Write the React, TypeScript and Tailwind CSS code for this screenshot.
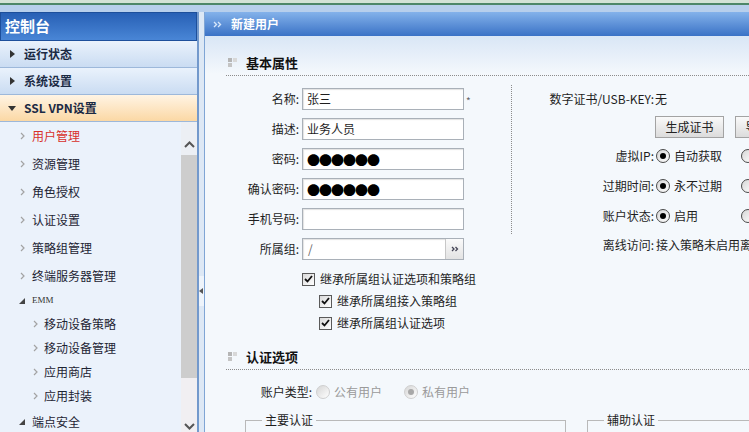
import React from "react";
import clsx from "clsx";

const subItems: { label: string; active?: boolean }[] = [
  { label: "用户管理", active: true },
  { label: "资源管理" },
  { label: "角色授权" },
  { label: "认证设置" },
  { label: "策略组管理" },
  { label: "终端服务器管理" },
];

const emmItems = ["移动设备策略", "移动设备管理", "应用商店", "应用封装"];

function Chev() {
  return (
    <svg width="5" height="8" viewBox="0 0 5 8" className="shrink-0">
      <path d="M1 1l3 3-3 3" fill="none" stroke="#a3a3a3" strokeWidth="1.2" />
    </svg>
  );
}

function TriRight() {
  return (
    <svg width="5" height="8" viewBox="0 0 5 8" className="shrink-0">
      <polygon points="0,0 5,4 0,8" fill="#333" />
    </svg>
  );
}

function TriDown() {
  return (
    <svg width="8" height="5" viewBox="0 0 8 5" className="shrink-0">
      <polygon points="0,0 8,0 4,5" fill="#333" />
    </svg>
  );
}

function TriCorner() {
  return (
    <svg width="6" height="6" viewBox="0 0 6 6" className="shrink-0">
      <polygon points="6,0 6,6 0,6" fill="#444" />
    </svg>
  );
}

function MenuHead({ label, open }: { label: string; open?: boolean }) {
  return (
    <div
      className={clsx(
        "flex h-[27px] items-center border-b border-[#9db8da] text-[12px] font-bold text-[#1b2a44]",
        open
          ? "bg-linear-to-b from-[#fff4e4] to-[#fbd8a4] pl-[8px]"
          : "bg-linear-to-b from-[#eaf2fc] to-[#cadcf2] pl-[10px]"
      )}
    >
      {open ? <TriDown /> : <TriRight />}
      <span className={open ? "ml-[8px]" : "ml-[9px]"}>{label}</span>
    </div>
  );
}

function Check() {
  return (
    <span className="flex h-[13px] w-[13px] shrink-0 items-center justify-center border border-[#5a5a5a] bg-linear-to-br from-[#dadada] to-white">
      <svg width="9" height="8" viewBox="0 0 9 8">
        <path d="M1 4l2.5 2.5L8 1" stroke="#111" strokeWidth="1.8" fill="none" />
      </svg>
    </span>
  );
}

function Radio({ checked, disabled }: { checked?: boolean; disabled?: boolean }) {
  return (
    <span
      className={clsx(
        "flex h-[14px] w-[14px] shrink-0 items-center justify-center rounded-full border bg-linear-to-br from-[#d6d6d6] to-white",
        disabled ? "border-[#cfcfcf]" : "border-[#4a4a4a]"
      )}
    >
      {checked && (
        <span
          className={clsx(
            "h-[6px] w-[6px] rounded-full",
            disabled ? "bg-[#a8a8a8]" : "bg-black"
          )}
        />
      )}
    </span>
  );
}

function SectionHead({ title }: { title: string }) {
  return (
    <div className="flex h-[26px] items-center border-b border-dotted border-[#8c8c8c]">
      <span className="ml-[2px] grid grid-cols-2 gap-[1px]">
        <span className="h-[4px] w-[4px] bg-[#b5b5b5]" />
        <span className="h-[4px] w-[4px] bg-[#d8d8d8]" />
        <span className="h-[4px] w-[4px] bg-[#c4c4c4]" />
        <span className="h-[4px] w-[4px]" />
      </span>
      <span className="ml-[9px] text-[13px] font-bold text-[#111]">{title}</span>
    </div>
  );
}

function Field({ label, children }: { label: string; children?: React.ReactNode }) {
  return (
    <div className="mb-[8px] flex h-[22px] items-center">
      <span className="w-[76px] shrink-0 pr-[3px] text-right">{label}:</span>
      {children}
    </div>
  );
}

function Box({ children }: { children?: React.ReactNode }) {
  return (
    <div className="flex h-[22px] w-[162px] items-center border border-[#a9b0b8] bg-white px-[4px] shadow-[inset_1px_1px_1px_#e2e2e2]">
      {children}
    </div>
  );
}

function Dots() {
  return <span className="text-[13px] leading-none tracking-[-1px] text-black">●●●●●●</span>;
}

function Btn({ children }: { children: React.ReactNode }) {
  return (
    <button className="h-[22px] w-[69px] shrink-0 border border-[#a3a3a3] bg-linear-to-b from-[#fafafa] to-[#dcdcdc] text-[12px] text-[#222]">
      {children}
    </button>
  );
}

function RightRow({ label, children, mb = "mb-[8px]" }: { label: string; children?: React.ReactNode; mb?: string }) {
  return (
    <div className={clsx("flex h-[22px] items-center", mb)}>
      <span className="w-[142px] shrink-0 text-right">{label}</span>
      {children}
    </div>
  );
}

function Choice({ text }: { text: string }) {
  return (
    <div className="flex w-[87px] shrink-0 items-center pl-[2px]">
      <Radio checked />
      <span className="ml-[4px]">{text}</span>
    </div>
  );
}

export default function App() {
  return (
    <div className="flex h-[432px] w-[749px] flex-col overflow-hidden bg-[#dbe7f5] font-['Noto_Sans_CJK_SC','Noto_Sans',sans-serif] text-[12px] text-[#1e1e1e]">
      {/* top strip */}
      <div className="h-[3px] shrink-0 bg-[#d3e2d6]" />
      <div className="h-[2px] shrink-0 bg-[#4d8768]" />
      <div className="h-[7px] shrink-0 bg-[#b7cfec]" />

      <div className="flex min-h-0 flex-1">
        {/* sidebar */}
        <aside className="flex w-[199px] shrink-0 flex-col border-r-2 border-[#7399cc] bg-[#ebf2fb]">
          <div className="flex h-[29px] shrink-0 items-center border border-[#1d4f9b] bg-linear-to-b from-[#2860b5] to-[#4986d6] pl-[4px] text-[15px] font-bold text-white">
            控制台
          </div>
          <MenuHead label="运行状态" />
          <MenuHead label="系统设置" />
          <MenuHead label="SSL VPN设置" open />

          <div className="flex min-h-0 flex-1">
            <div className="flex-1">
              {subItems.map((it) => (
                <div key={it.label} className="flex h-[28px] items-center pl-[20px]">
                  <Chev />
                  <span className={clsx("ml-[7px]", it.active ? "text-[#d8302a]" : "text-[#1d2433]")}>
                    {it.label}
                  </span>
                </div>
              ))}
              <div className="flex h-[22px] items-center pl-[19px]">
                <TriCorner />
                <span className="ml-[7px] font-['Liberation_Serif',serif] text-[9px] text-[#333]">EMM</span>
              </div>
              {emmItems.map((t) => (
                <div key={t} className="flex h-[24px] items-center pl-[33px]">
                  <Chev />
                  <span className="ml-[6px] text-[#1d2433]">{t}</span>
                </div>
              ))}
              <div className="flex h-[28px] items-center pl-[19px]">
                <TriCorner />
                <span className="ml-[7px] text-[#1d2433]">端点安全</span>
              </div>
            </div>

            {/* scrollbar */}
            <div className="flex w-[16px] shrink-0 flex-col bg-[#eceff4]">
              <div className="flex h-[33px] shrink-0 items-end justify-center pb-[7px]">
                <svg width="11" height="7" viewBox="0 0 11 7">
                  <path d="M1 6l4.5-4.5L10 6" fill="none" stroke="#555" strokeWidth="2" />
                </svg>
              </div>
              <div className="h-[223px] shrink-0 bg-[#cdcdcd]" />
              <div className="flex flex-1 items-end justify-center bg-[#f1eff2] pb-[2px]">
                <svg width="11" height="7" viewBox="0 0 11 7">
                  <path d="M1 1l4.5 4.5L10 1" fill="none" stroke="#555" strokeWidth="2" />
                </svg>
              </div>
            </div>
          </div>
        </aside>

        {/* splitter */}
        <div className="flex w-[5px] shrink-0 flex-col bg-[#dde8f5] pt-[264px]">
          <div className="flex h-[30px] items-center bg-[#eef4fb]">
            <svg width="4" height="6" viewBox="0 0 4 6">
              <polygon points="4,0 4,6 0,3" fill="#555" />
            </svg>
          </div>
        </div>

        {/* main */}
        <main className="flex min-w-0 flex-1 flex-col overflow-hidden border-l border-[#7fa5d5] bg-[#f4f8fc]">
          <div className="flex h-[24px] shrink-0 items-center bg-linear-to-b from-[#84b2ea] to-[#3a72c6] pl-[8px] font-bold text-white">
            <svg width="10" height="7" viewBox="0 0 10 7">
              <path d="M1 1l2.5 2.5L1 6M5 1l2.5 2.5L5 6" fill="none" stroke="#d6e6fa" strokeWidth="1.4" />
            </svg>
            <span className="ml-[8px]">新建用户</span>
          </div>

          <div className="flex-1 bg-[linear-gradient(to_bottom,#d9e6f6,#f4f8fc_38px)] pl-[21px] pt-[14px] whitespace-nowrap">
            <SectionHead title="基本属性" />

            <div className="flex">
              {/* left column */}
              <div className="w-[285px] shrink-0 pt-[12px]">
                <Field label="名称">
                  <Box>张三</Box>
                  <span className="ml-[2px] mt-[3px] text-[10px] text-[#666]">*</span>
                </Field>
                <Field label="描述">
                  <Box>业务人员</Box>
                </Field>
                <Field label="密码">
                  <Box>
                    <Dots />
                  </Box>
                </Field>
                <Field label="确认密码">
                  <Box>
                    <Dots />
                  </Box>
                </Field>
                <Field label="手机号码">
                  <Box />
                </Field>
                <Field label="所属组">
                  <div className="flex h-[22px] w-[162px] items-center border border-[#a9b0b8] bg-white shadow-[inset_1px_1px_1px_#e2e2e2]">
                    <span className="flex-1 pl-[5px] text-[#666]">/</span>
                    <span className="flex h-full w-[18px] items-center justify-center border-l border-[#c7c7c7] bg-linear-to-b from-[#fafafa] to-[#e3e3e3]">
                      <svg width="8" height="6" viewBox="0 0 8 6">
                        <path d="M1 1l2 2-2 2M4.5 1l2 2-2 2" fill="none" stroke="#445" strokeWidth="1.3" />
                      </svg>
                    </span>
                  </div>
                </Field>

                <div className="mt-[5px] flex h-[22px] items-center pl-[76px]">
                  <Check />
                  <span className="ml-[5px]">继承所属组认证选项和策略组</span>
                </div>
                <div className="flex h-[22px] items-center pl-[93px]">
                  <Check />
                  <span className="ml-[5px]">继承所属组接入策略组</span>
                </div>
                <div className="flex h-[22px] items-center pl-[93px]">
                  <Check />
                  <span className="ml-[5px]">继承所属组认证选项</span>
                </div>
              </div>

              <div className="mt-[9px] h-[149px] w-0 shrink-0 border-l border-dotted border-[#8c8c8c]" />

              {/* right column */}
              <div className="w-[420px] shrink-0 pt-[12px]">
                <RightRow label="数字证书/USB-KEY:" mb="mb-[6px]">
                  <span className="ml-[1px]">无</span>
                </RightRow>
                <RightRow label="" mb="mb-[7px]">
                  <span className="ml-[1px] flex gap-[11px]">
                    <Btn>生成证书</Btn>
                    <Btn>导出证书</Btn>
                  </span>
                </RightRow>
                <RightRow label="虚拟IP:">
                  <Choice text="自动获取" />
                  <Radio />
                </RightRow>
                <RightRow label="过期时间:">
                  <Choice text="永不过期" />
                  <Radio />
                </RightRow>
                <RightRow label="账户状态:" mb="mb-[7px]">
                  <Choice text="启用" />
                  <Radio />
                </RightRow>
                <RightRow label="离线访问:">
                  <span className="ml-[2px]">接入策略未启用离线访问</span>
                </RightRow>
              </div>
            </div>

            <div className="mt-[10px]">
              <SectionHead title="认证选项" />
            </div>

            <div className="mt-[11px] flex h-[22px] items-center">
              <span className="w-[86px] shrink-0 text-right">账户类型:</span>
              <div className="ml-[4px] flex w-[88px] shrink-0 items-center">
                <Radio disabled />
                <span className="ml-[4px] text-[#9a9a9a]">公有用户</span>
              </div>
              <Radio checked disabled />
              <span className="ml-[4px] text-[#9a9a9a]">私有用户</span>
            </div>

            <div className="mt-[8px] flex">
              <fieldset className="ml-[19px] h-[40px] w-[321px] shrink-0 border border-[#b9b9b9] px-[16px]">
                <legend className="px-[3px]">主要认证</legend>
              </fieldset>
              <fieldset className="ml-[21px] h-[40px] w-[300px] shrink-0 border border-[#b9b9b9] px-[16px]">
                <legend className="px-[3px]">辅助认证</legend>
              </fieldset>
            </div>
          </div>
        </main>
      </div>
    </div>
  );
}
